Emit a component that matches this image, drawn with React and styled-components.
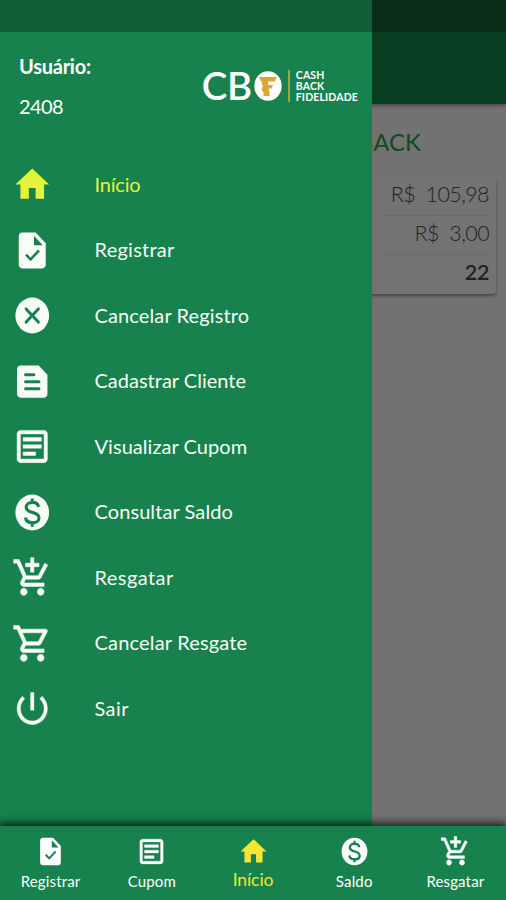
import styled, { createGlobalStyle } from "styled-components";

const GlobalStyle = createGlobalStyle`
  * {
    box-sizing: border-box;
  }
  body {
    margin: 0;
    background-color: #727272;
    font-family: Lato, "Open Sans", sans-serif;
  }
  h1, h2, p {
    margin: 0;
    font-weight: 400;
  }
`;

const glyphs = {
  home: <path d="M10 20v-6h4v6h5v-8h3L12 3 2 12h3v8z" />,
  task: (
    <>
      <path
        fillRule="evenodd"
        d="M14 2H6c-1.1 0-2 .9-2 2v16c0 1.1.9 2 2 2h12c1.1 0 2-.9 2-2V8l-6-6zm-1 7V3.800L18.200 9H13z"
      />
      <path
        d="M8.300 14.300l2.700 2.700 5-5"
        fill="none"
        stroke="#17824e"
        strokeWidth="1.500"
      />
    </>
  ),
  cancel: (
    <>
      <circle cx="12" cy="12" r="10" />
      <path
        d="M8.300 8.300l7.400 7.400M15.700 8.300l-7.400 7.400"
        fill="none"
        stroke="#17824e"
        strokeWidth="1.600"
        strokeLinecap="round"
      />
    </>
  ),
  feed: (
    <>
      <path d="M15.800 3H5c-1.1 0-2 .9-2 2v14c0 1.1.9 2 2 2h14c1.1 0 2-.9 2-2V8.200L15.800 3z" />
      <path
        d="M8 8.200h5M8 12.100h8M8 16h8"
        fill="none"
        stroke="#17824e"
        strokeWidth="1.700"
        strokeLinecap="round"
      />
    </>
  ),
  article: (
    <path
      fillRule="evenodd"
      d="M5 3h14c1.1 0 2 .9 2 2v14c0 1.1-.9 2-2 2H5c-1.1 0-2-.9-2-2V5c0-1.1.9-2 2-2zm0 2v14h14V5zm1.600 2h10.800v2H6.600zm0 4h10.800v2H6.600zm0 4h7.400v2H6.600z"
      stroke="currentColor"
      strokeWidth=".25"
    />
  ),
  money: (
    <>
      <circle cx="12" cy="12" r="10" />
      <path
        d="M15.700 8.900c-.2-1.600-1.600-2.500-3.600-2.500-2.100 0-3.700 1.100-3.700 2.700 0 1.700 1.400 2.300 3.600 2.800 2.400.6 4 1.300 4 3.100 0 1.700-1.600 2.700-3.900 2.700-2.400 0-3.900-1-4.100-2.900M12 4.200v2.300M12 17.600v2.300"
        fill="none"
        stroke="#17824e"
        strokeWidth="1.800"
      />
    </>
  ),
  cartPlus: (
    <path
      d="M11 9h2V6h3V4h-3V1h-2v3H8v2h3v3zm-4 9c-1.1 0-1.990.9-1.990 2S5.900 22 7 22s2-.9 2-2-.9-2-2-2zm10 0c-1.1 0-1.990.9-1.990 2s.89 2 1.990 2 2-.9 2-2-.9-2-2-2zm-9.830-3.250l.03-.12.9-1.630h7.450c.75 0 1.410-.41 1.750-1.030l3.860-7.010L19.420 4h-.01l-1.1 2-2.760 5H8.530l-.13-.27L6.160 6l-.95-2-.94-2H1v2h2l3.600 7.590-1.350 2.450c-.16.28-.25.61-.25.96 0 1.1.9 2 2 2h12v-2H7.420c-.13 0-.25-.11-.25-.25z"
      stroke="currentColor"
      strokeWidth=".3"
    />
  ),
  cart: (
    <path
      d="M15.550 13c.75 0 1.410-.41 1.750-1.030l3.580-6.490C21.250 4.820 20.770 4 20.010 4H5.210l-.94-2H1v2h2l3.600 7.590-1.350 2.440C4.520 15.370 5.480 17 7 17h12v-2H7l1.100-2h7.450zM6.160 6h12.150l-2.760 5H8.530L6.160 6zM7 18c-1.1 0-1.990.9-1.990 2S5.900 22 7 22s2-.9 2-2-.9-2-2-2zm10 0c-1.1 0-1.990.9-1.990 2s.89 2 1.990 2 2-.9 2-2-.9-2-2-2z"
      stroke="currentColor"
      strokeWidth=".3"
    />
  ),
  power: (
    <path
      d="M13 3h-2v10h2V3zm4.830 2.170l-1.420 1.420C17.990 7.860 19 9.810 19 12c0 3.870-3.130 7-7 7s-7-3.130-7-7c0-2.190 1.010-4.140 2.580-5.420L6.170 5.170C4.230 6.820 3 9.260 3 12c0 4.970 4.030 9 9 9s9-4.030 9-9c0-2.740-1.230-5.180-3.170-6.830z"
      stroke="currentColor"
      strokeWidth=".2"
    />
  ),
};

const menuItems = [
  { icon: "home", label: "Início", tracking: -0.2, active: true },
  { icon: "task", label: "Registrar", tracking: 0.25 },
  { icon: "cancel", label: "Cancelar Registro", tracking: 0.12 },
  { icon: "feed", label: "Cadastrar Cliente", tracking: 0 },
  { icon: "article", label: "Visualizar Cupom", tracking: 0.05 },
  { icon: "money", label: "Consultar Saldo", tracking: 0.08 },
  { icon: "cartPlus", label: "Resgatar", tracking: 0.45 },
  { icon: "cart", label: "Cancelar Resgate", tracking: 0.18 },
  { icon: "power", label: "Sair", tracking: 0.4 },
];

const tabs = [
  { icon: "task", label: "Registrar" },
  { icon: "article", label: "Cupom" },
  { icon: "home", label: "Início", active: true },
  { icon: "money", label: "Saldo" },
  { icon: "cartPlus", label: "Resgatar" },
];

function App() {
  return (
    <Screen>
      <GlobalStyle />
      <AppBar />
      <Content>
        <Title>CASHBACK</Title>
        <Card>
          <Row>R$&nbsp; 105,98</Row>
          <Row>R$&nbsp; 3,00</Row>
          <Row $strong>22</Row>
        </Card>
      </Content>

      <Drawer>
        <StatusBar />
        <DrawerHeader>
          <User>
            <UserLabel>Usuário:</UserLabel>
            <p>2408</p>
          </User>
          <Logo />
        </DrawerHeader>
        <Menu>
          {menuItems.map((item) => (
            <MenuItem
              key={item.label}
              $active={item.active}
              $tracking={item.tracking}
            >
              <Icon viewBox="0 0 24 24" preserveAspectRatio="none">
                {glyphs[item.icon]}
              </Icon>
              <span>{item.label}</span>
            </MenuItem>
          ))}
        </Menu>
      </Drawer>

      <TabBar>
        {tabs.map((tab) => (
          <Tab key={tab.label} $active={tab.active}>
            <TabIcon viewBox="0 0 24 24" preserveAspectRatio="none">
              {glyphs[tab.icon]}
            </TabIcon>
            <span>{tab.label}</span>
          </Tab>
        ))}
      </TabBar>
    </Screen>
  );
}

function Logo() {
  return (
    <LogoBox>
      <Initials>CB</Initials>
      <Coin viewBox="0 0 28 30">
        <ellipse cx="14" cy="15" rx="13.700" ry="14.700" fill="#fff" />
        <path
          d="M5 6h17.500L21 10.500H14V14H19L17.500 17.500H14.500L15.500 21V25H9.500V21L7.500 19L9 15L7.500 12.500L8.500 10.500H7z"
          fill="#dda62c"
        />
      </Coin>
      <Divider />
      <Tagline>
        <span>CASH</span>
        <span>BACK</span>
        <span>FIDELIDADE</span>
      </Tagline>
    </LogoBox>
  );
}

const Screen = styled.div`
  position: relative;
  width: 506px;
  height: 900px;
  overflow: hidden;
  display: flex;
  flex-direction: column;
  background-color: #727272;
`;

const AppBar = styled.header`
  height: 104px;
  flex-shrink: 0;
  background: linear-gradient(#092d19 32px, #0a3e23 32px);
  box-shadow: 0 1px 4px rgba(0, 0, 0, 0.5);
`;

const Content = styled.main`
  flex: 1;
  display: flex;
  flex-direction: column;
  padding: 22px 10px 0;
`;

const Title = styled.h1`
  height: 33px;
  font-size: 24px;
  line-height: 32px;
  color: #124a20;
  text-align: right;
  padding-right: 75px;
`;

const Card = styled.section`
  height: 117px;
  margin-top: 18px;
  padding: 0 7px 0 373px;
  border-radius: 4px;
  background-color: #737373;
  box-shadow: 0 2px 3px rgba(0, 0, 0, 0.4);
`;

const Row = styled.div`
  height: 39px;
  font-size: 21.500px;
  line-height: 34px;
  letter-spacing: ${(props) => (props.$strong ? -0.4 : -0.6)}px;
  white-space: nowrap;
  text-align: right;
  color: #222;
  font-weight: ${(props) => (props.$strong ? 600 : 300)};
  border-bottom: ${(props) => (props.$strong ? "none" : "1px solid #6a6a6a")};
`;

const Drawer = styled.aside`
  position: absolute;
  top: 0;
  left: 0;
  width: 372px;
  height: 100%;
  background-color: #17824e;
  color: #fff;
`;

const StatusBar = styled.div`
  height: 32px;
  background-color: #115e38;
`;

const DrawerHeader = styled.div`
  height: 119px;
  display: flex;
  justify-content: space-between;
  padding: 22px 14px 0 19px;
`;

const User = styled.div`
  display: flex;
  flex-direction: column;
  gap: 16px;
  font-size: 20px;
  line-height: 24px;
  letter-spacing: -0.6px;
`;

const UserLabel = styled.p`
  font-weight: 700;
  letter-spacing: -0.25px;
`;

const LogoBox = styled.div`
  height: 34px;
  margin-top: 15px;
  display: flex;
  align-items: center;
`;

const Initials = styled.span`
  font-size: 38.500px;
  line-height: 34px;
  font-weight: 600;
  position: relative;
  top: -1px;
  margin-right: 2px;
  letter-spacing: -0.3px;
`;

const Coin = styled.svg`
  width: 28px;
  height: 30px;
`;

const Divider = styled.i`
  width: 2px;
  height: 32px;
  margin: 0 6px;
  background-color: #a2a63c;
`;

const Tagline = styled.span`
  display: flex;
  flex-direction: column;
  font-size: 10.500px;
  line-height: 11px;
  font-weight: 700;
  letter-spacing: 0.15px;
`;

const Menu = styled.nav`
  display: flex;
  flex-direction: column;
`;

const MenuItem = styled.a`
  height: 65.500px;
  display: flex;
  align-items: center;
  gap: 42px;
  padding-left: 12px;
  font-size: 20px;
  letter-spacing: ${(props) => props.$tracking}px;
  color: ${(props) => (props.$active ? "#e3f43c" : "#f8fdf7")};
`;

const Icon = styled.svg`
  width: 40.500px;
  height: 43px;
  margin-top: 2px;
  flex-shrink: 0;
  fill: currentColor;
`;

const TabBar = styled.footer`
  position: relative;
  height: 74px;
  flex-shrink: 0;
  display: flex;
  background-color: #17824e;
  box-shadow: 0 -2px 8px 1px rgba(0, 0, 0, 0.75);
`;

const Tab = styled.a`
  flex: 1;
  display: flex;
  flex-direction: column;
  align-items: center;
  padding-top: 9px;
  color: ${(props) => (props.$active ? "#f5e636" : "#fff")};
  font-size: ${(props) => (props.$active ? 17.5 : 15)}px;
  letter-spacing: ${(props) => (props.$active ? -0.1 : 0.15)}px;

  & > span {
    line-height: 20px;
    margin-top: ${(props) => (props.$active ? 2 : 3)}px;
  }
`;

const TabIcon = styled.svg`
  width: 31px;
  height: 33px;
  fill: currentColor;
`;

export default App;
